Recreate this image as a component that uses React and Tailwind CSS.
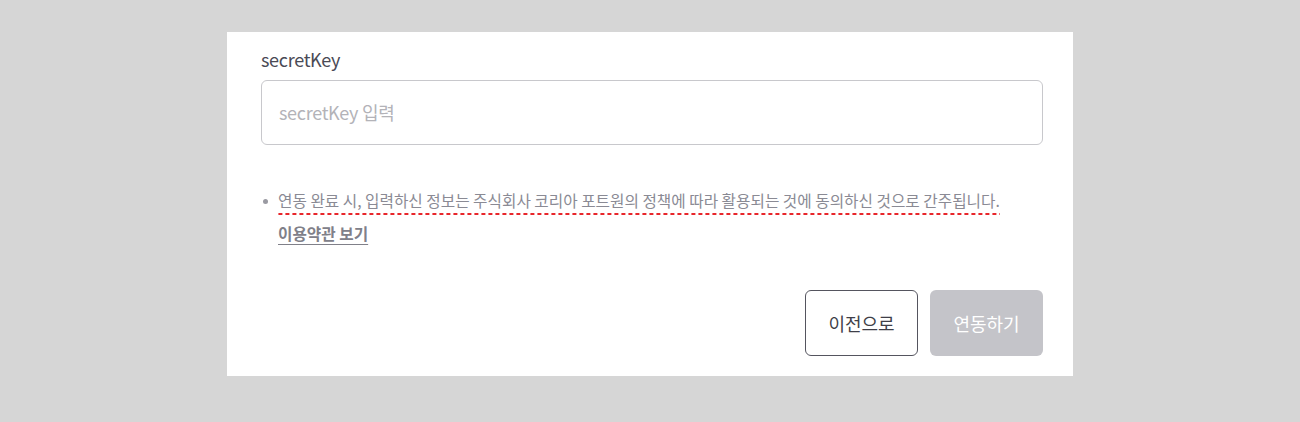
import React from 'react';

const font = { fontFamily: '"Noto Sans CJK KR", "Noto Sans", sans-serif' };

export default function App() {
  return (
    <div className="w-full h-[422px] bg-[#d6d6d6] pt-[32px]" style={font}>
      <div className="mx-auto w-[846px] h-[344px] bg-white pl-[34px] pr-[30px] pt-[14px]">
        <div className="text-[18px] leading-[26px] text-[#4a4a55] tracking-[-0.3px]">secretKey</div>
        <div className="mt-[8px] h-[65px] rounded-[6px] border border-[#c8c8cc] flex items-center px-[17px]">
          <input
            className="w-full outline-none text-[18px] text-[#4a4a55] placeholder:text-[#b3b3b8] tracking-[-0.3px] bg-transparent"
            placeholder="secretKey 입력"
          />
        </div>

        <div className="mt-[45px] flex">
          <div className="w-[17px] pt-[9px] pl-[2px]">
            <div className="w-[5px] h-[5px] rounded-full bg-[#9a9aa2]" />
          </div>
          <div className="text-[15.7px] leading-[22px] text-[#8a8a94]">
            <div>
              <span className="inline-block pb-[3px] bg-[linear-gradient(to_right,#e8262b_4px,transparent_4px)] bg-[length:7px_2px] bg-repeat-x bg-bottom">
                연동 완료 시, 입력하신 정보는 주식회사 코리아 포트원의 정책에 따라 활용되는 것에 동의하신 것으로 간주됩니다.
              </span>
            </div>
            <div className="mt-[8px] font-bold text-[#808089] underline underline-offset-[4px]">
              이용약관 보기
            </div>
          </div>
        </div>

        <div className="mt-[45px] flex justify-end gap-[12px]">
          <button className="w-[113px] h-[66px] rounded-[6px] border border-[#55555f] bg-white text-[18px] text-[#3f3f48]">
            이전으로
          </button>
          <button className="w-[113px] h-[66px] rounded-[6px] bg-[#c4c4c9] text-[18px] text-white">
            연동하기
          </button>
        </div>
      </div>
    </div>
  );
}
